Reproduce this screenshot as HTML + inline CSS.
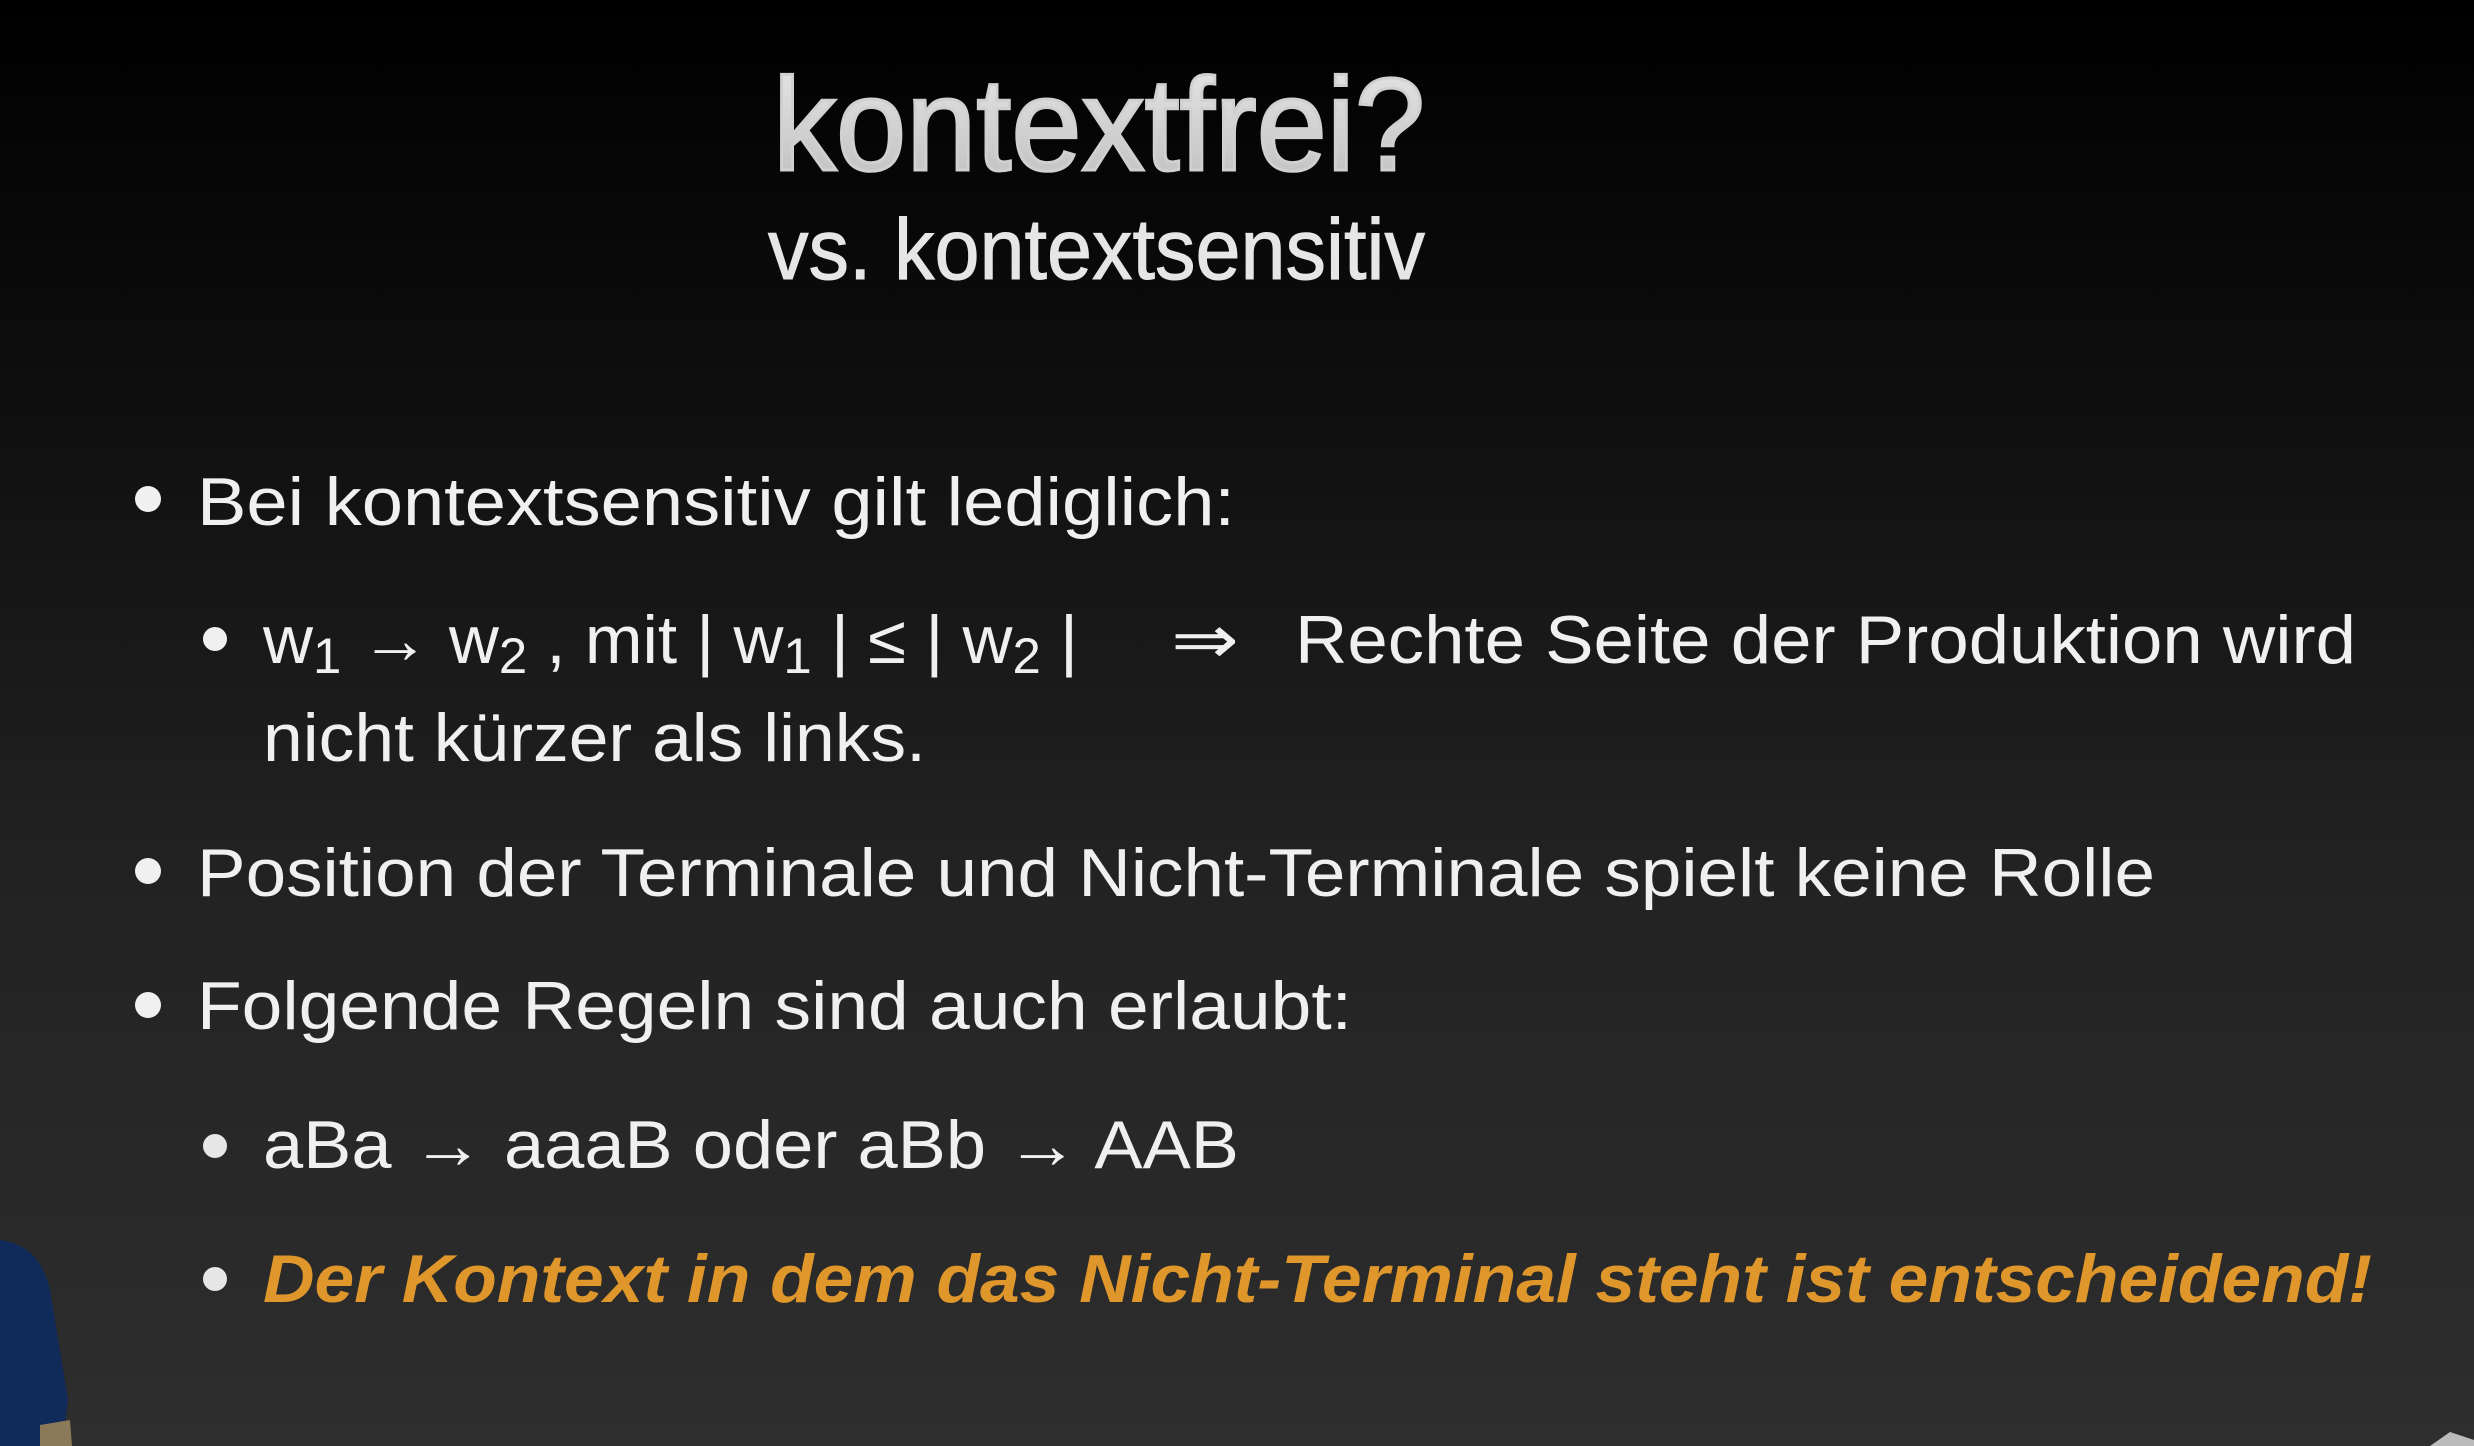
<!DOCTYPE html>
<html><head><meta charset="utf-8"><style>
html,body{margin:0;padding:0;width:2474px;height:1446px;overflow:hidden;background:#000}
svg{display:block}
</style></head><body>
<svg width="2474" height="1446" xmlns="http://www.w3.org/2000/svg">
<defs>
<linearGradient id="bg" x1="0" y1="0" x2="0" y2="1">
<stop offset="0" stop-color="#000"/>
<stop offset="0.25" stop-color="#0d0d0d"/>
<stop offset="0.6" stop-color="#222"/>
<stop offset="1" stop-color="#2e2e2e"/>
</linearGradient>
<linearGradient id="tg" x1="0" y1="0" x2="0" y2="1">
<stop offset="0" stop-color="#e8e8e8"/>
<stop offset="1" stop-color="#bdbdbd"/>
</linearGradient>
</defs>
<rect width="2474" height="1446" fill="url(#bg)"/>
<path d="M0 1240 Q40 1245 50 1290 L68 1400 L62 1446 L0 1446 Z" fill="#102a5a"/>
<path d="M40 1425 L70 1420 L72 1446 L40 1446Z" fill="#8a7a5a"/>
<path d="M2430 1446 L2450 1432 L2474 1440 L2474 1446Z" fill="#bbb"/>
<g font-family="Liberation Sans, sans-serif" fill="#f0f0f0">
<text x="773" y="170" font-size="132" fill="url(#tg)" stroke="#d0d0d0" stroke-width="3" textLength="652" lengthAdjust="spacingAndGlyphs">kontextfrei?</text>
<text x="768" y="279" font-size="86" textLength="657" lengthAdjust="spacingAndGlyphs" fill="#e6e6e6" stroke="#e6e6e6" stroke-width="1">vs. kontextsensitiv</text>
<g font-size="68">
<text x="197" y="525" textLength="1038" lengthAdjust="spacingAndGlyphs">Bei kontextsensitiv gilt lediglich:</text>
<text x="263" y="663" textLength="815" lengthAdjust="spacingAndGlyphs">w<tspan font-size="50" dy="10">1</tspan><tspan dy="-10"> → w</tspan><tspan font-size="50" dy="10">2</tspan><tspan dy="-10"> , mit | w</tspan><tspan font-size="50" dy="10">1</tspan><tspan dy="-10"> | ≤ | w</tspan><tspan font-size="50" dy="10">2</tspan><tspan dy="-10"> |</tspan></text>
<text x="1171" y="663" textLength="68" lengthAdjust="spacingAndGlyphs">⇒</text>
<text x="1295" y="663" textLength="1061" lengthAdjust="spacingAndGlyphs">Rechte Seite der Produktion wird</text>
<text x="263" y="761" textLength="663" lengthAdjust="spacingAndGlyphs">nicht kürzer als links.</text>
<text x="197" y="896" textLength="1958" lengthAdjust="spacingAndGlyphs">Position der Terminale und Nicht-Terminale spielt keine Rolle</text>
<text x="197" y="1029" textLength="1155" lengthAdjust="spacingAndGlyphs">Folgende Regeln sind auch erlaubt:</text>
<text x="263" y="1168" textLength="976" lengthAdjust="spacingAndGlyphs">aBa → aaaB oder  aBb → AAB</text>
<text x="263" y="1302" textLength="2109" lengthAdjust="spacingAndGlyphs" font-weight="bold" font-style="italic" fill="#df972c">Der Kontext in dem das Nicht-Terminal steht ist entscheidend!</text>
</g>
<circle cx="148" cy="499" r="13"/>
<circle cx="215" cy="639" r="12"/>
<circle cx="148" cy="871" r="13"/>
<circle cx="148" cy="1005" r="13"/>
<circle cx="215" cy="1146" r="12" fill="#e6e6e6"/>
<circle cx="215" cy="1279" r="12" fill="#e6e6e6"/>
</g>
</svg>
</body></html>
